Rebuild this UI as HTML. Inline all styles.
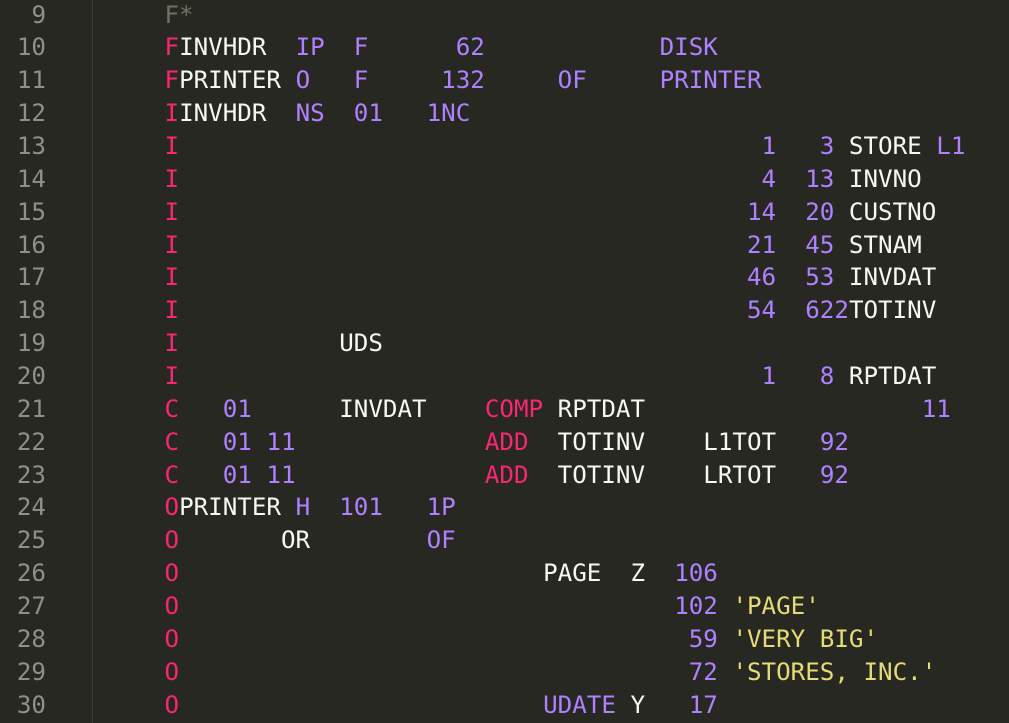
<!DOCTYPE html>
<html><head><style>
html,body{margin:0;padding:0;background:#272822;width:1009px;height:723px;overflow:hidden}
body{font-family:"DejaVu Sans Mono","Liberation Mono",monospace;font-size:24.2px;color:#f8f8f2}
.g{position:absolute;left:92px;top:0;width:1px;height:723px;background:#3b3c35}
.ln{position:absolute;left:0;width:46px;text-align:right;color:#8f908a;white-space:pre}
.c{position:absolute;left:165px;white-space:pre}
.p{color:#f92672}.v{color:#ae81ff}.y{color:#e6db74}.m{color:#75715e}
</style></head><body>
<div class="g"></div>
<div id="x"></div>
<script>
var L=[
'<span class="m">F*</span>',
'<span class="p">F</span>INVHDR  <span class="v">IP  F      62            DISK</span>',
'<span class="p">F</span>PRINTER <span class="v">O   F     132     OF     PRINTER</span>',
'<span class="p">I</span>INVHDR  <span class="v">NS  01   1NC</span>',
'<span class="p">I</span>                                        <span class="v">1   3</span> STORE <span class="v">L1</span>',
'<span class="p">I</span>                                        <span class="v">4  13</span> INVNO',
'<span class="p">I</span>                                       <span class="v">14  20</span> CUSTNO',
'<span class="p">I</span>                                       <span class="v">21  45</span> STNAM',
'<span class="p">I</span>                                       <span class="v">46  53</span> INVDAT',
'<span class="p">I</span>                                       <span class="v">54  622</span>TOTINV',
'<span class="p">I</span>           UDS',
'<span class="p">I</span>                                        <span class="v">1   8</span> RPTDAT',
'<span class="p">C</span>   <span class="v">01</span>      INVDAT    <span class="p">COMP</span> RPTDAT                   <span class="v">11</span>',
'<span class="p">C</span>   <span class="v">01 11</span>             <span class="p">ADD</span>  TOTINV    L1TOT   <span class="v">92</span>',
'<span class="p">C</span>   <span class="v">01 11</span>             <span class="p">ADD</span>  TOTINV    LRTOT   <span class="v">92</span>',
'<span class="p">O</span>PRINTER <span class="v">H  101   1P</span>',
'<span class="p">O</span>       OR        <span class="v">OF</span>',
'<span class="p">O</span>                         PAGE  Z  <span class="v">106</span>',
'<span class="p">O</span>                                  <span class="v">102</span> <span class="y">\'PAGE\'</span>',
'<span class="p">O</span>                                   <span class="v">59</span> <span class="y">\'VERY BIG\'</span>',
'<span class="p">O</span>                                   <span class="v">72</span> <span class="y">\'STORES, INC.\'</span>',
'<span class="p">O</span>                         <span class="v">UDATE</span> Y   <span class="v">17</span>'
];
var h='';
for(var i=0;i<L.length;i++){var t=(-1.5+i*32.86).toFixed(2);
h+='<div class="ln" style="top:'+t+'px;line-height:32.86px">'+(9+i)+'</div><div class="c" style="top:'+t+'px;line-height:32.86px;left:164.5px">'+L[i]+'</div>';}
document.getElementById('x').innerHTML=h;
</script>
</body></html>
